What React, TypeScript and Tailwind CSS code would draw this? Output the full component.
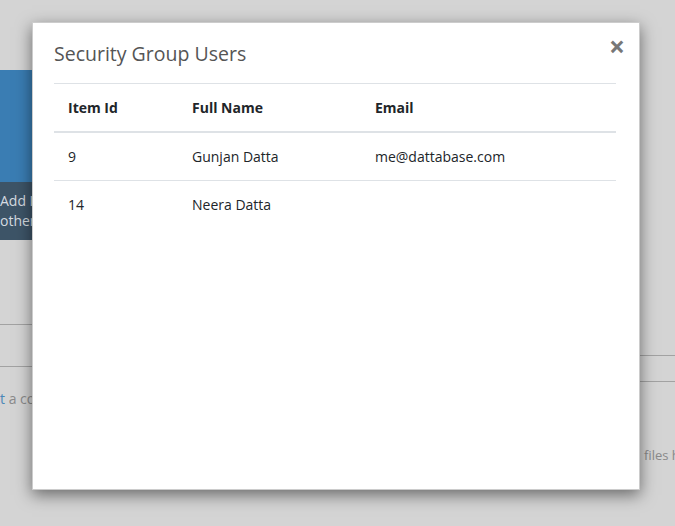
const users = [
  { id: '9', name: 'Gunjan Datta', email: 'me@dattabase.com' },
  { id: '14', name: 'Neera Datta', email: '' },
];

const cols = 'grid grid-cols-[126px_183px_1fr] items-center';

export default function App() {
  return (
    <div className="relative h-[526px] w-[675px] overflow-hidden bg-[#d4d4d4] font-['Open_Sans','Noto_Sans',sans-serif]">
      {/* page under the backdrop */}
      <div className="flex">
        <div className="w-[300px] pt-[70px]">
          <div className="h-[112px] bg-[#3a7db3]" />
          <div className="flex h-[58px] flex-col justify-center bg-[#3d5467] text-[14px] leading-[20px] text-[#d5dbe0]">
            <span>Add Items</span>
            <span>others</span>
          </div>
          <div className="mt-[84px] border-t border-[#a2a2a2]" />
          <div className="mt-[41px] border-t border-[#a2a2a2]" />
          <p className="mt-[21px] text-[14px] text-[#8a8a8a]">
            <span className="text-[#4a86b8]">t</span> a conversation
          </p>
        </div>
        <div className="ml-[340px] w-[35px] shrink-0 overflow-hidden pt-[355px]">
          <div className="border-t border-[#a2a2a2]" />
          <div className="mt-[25px] border-t border-[#a2a2a2]" />
          <p className="mt-[64px] whitespace-nowrap pl-[4px] text-[13px] text-[#8a8a8a]">files h</p>
        </div>
      </div>

      {/* modal */}
      <div className="absolute left-[32px] top-[22px] h-[468px] w-[608px] border border-black/20 bg-white shadow-[0_5px_15px_rgba(0,0,0,0.5)]">
        <div className="px-[21px] pt-[16px]">
          <div className="flex items-start justify-between">
            <h2 className="text-[19.5px] leading-[30px] text-[#555]">Security Group Users</h2>
            <button className="-mr-[7px] -mt-[8px] text-[28px] font-bold leading-[30px] text-[#777]">×</button>
          </div>
          <div className="mt-[14px] w-[562px] text-[14px] text-[#212529]">
            <div className={`${cols} h-[50px] border-t border-b-2 border-[#dee2e6] font-bold`}>
              <div className="pl-[14px]">Item Id</div>
              <div className="pl-[12px]">Full Name</div>
              <div className="pl-[12px]">Email</div>
            </div>
            <div className={`${cols} h-[48px] border-b border-[#dee2e6]`}>
              <div className="pl-[14px]">{users[0].id}</div>
              <div className="pl-[12px]">{users[0].name}</div>
              <div className="pl-[12px]">{users[0].email}</div>
            </div>
            <div className={`${cols} h-[47px]`}>
              <div className="pl-[14px]">{users[1].id}</div>
              <div className="pl-[12px]">{users[1].name}</div>
              <div className="pl-[12px]">{users[1].email}</div>
            </div>
          </div>
        </div>
      </div>
    </div>
  );
}
